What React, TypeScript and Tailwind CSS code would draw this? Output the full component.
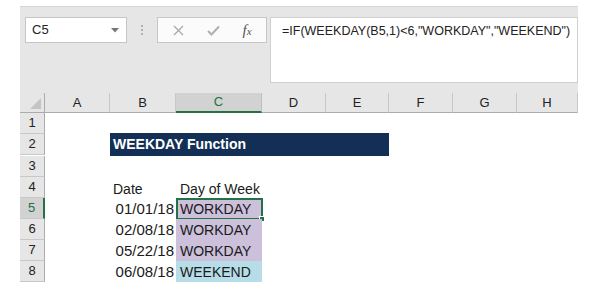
import React from 'react';

const cols = ['A', 'B', 'C', 'D', 'E', 'F', 'G', 'H'];

const Cell = ({ children, className = '' }: { children?: React.ReactNode; className?: string }) => (
  <div className={`h-[21px] flex items-center text-[14px] text-[#1a1a1a] ${className}`}>{children}</div>
);

const RowHead = ({ n, active = false }: { n: number; active?: boolean }) => (
  <div
    className={`h-[21px] flex items-center justify-center text-[13px] border-b border-[#c8c8c8] ${
      active ? 'bg-[#d2d2d2] text-[#217346] border-r-2 border-r-[#217346]' : 'bg-[#e6e6e6] text-[#222] border-r border-r-[#ababab]'
    }`}
  >
    {n}
  </div>
);

export default function App() {
  const rows = [
    { d: '01/01/18', v: 'WORKDAY', bg: 'bg-[#ccc0da]' },
    { d: '02/08/18', v: 'WORKDAY', bg: 'bg-[#ccc0da]' },
    { d: '05/22/18', v: 'WORKDAY', bg: 'bg-[#ccc0da]' },
    { d: '06/08/18', v: 'WEEKEND', bg: 'bg-[#b7dee8]' },
  ];

  return (
    <div className="w-[600px] h-[292px] bg-white pt-[6px] pl-[20px]" style={{ fontFamily: '"Liberation Sans", Arial, sans-serif' }}>
      <div className="w-[558px]">
        {/* formula toolbar */}
        <div className="h-[87px] bg-[#e6e6e6] border-t border-[#d6d6d6] pt-[10px] pl-[5px] flex items-start">
          <div className="w-[102px] h-[26px] bg-white border border-[#c6c6c6] flex items-center justify-between pl-[6px] pr-[7px]">
            <span className="text-[13px] text-[#222]">C5</span>
            <svg width="8" height="5" viewBox="0 0 8 5">
              <path d="M0 0 L8 0 L4 4.5 Z" fill="#777" />
            </svg>
          </div>
          <div className="w-[30px] h-[26px] flex flex-col items-center justify-center gap-[2px]">
            <span className="w-[2px] h-[2px] bg-[#b0b0b0]" />
            <span className="w-[2px] h-[2px] bg-[#b0b0b0]" />
            <span className="w-[2px] h-[2px] bg-[#b0b0b0]" />
          </div>
          <div className="w-[110px] h-[26px] bg-[#fbfbfb] border border-[#c6c6c6] flex items-center">
            <div className="w-[40px] flex justify-center">
              <svg width="11" height="11" viewBox="0 0 11 11">
                <path d="M1 1 L10 10 M10 1 L1 10" stroke="#a8a8a8" strokeWidth="1.3" />
              </svg>
            </div>
            <div className="w-[30px] flex justify-center">
              <svg width="13" height="11" viewBox="0 0 13 11">
                <path d="M1 6 L4.5 9.5 L12 1.5" stroke="#b0b0b0" strokeWidth="2" fill="none" />
              </svg>
            </div>
            <div className="w-[38px] flex justify-center">
              <span className="text-[15px] italic text-[#555]" style={{ fontFamily: '"Liberation Serif", serif' }}>
                f<span className="text-[11px]">x</span>
              </span>
            </div>
          </div>
          <div className="ml-[3px] flex-1 h-[66px] bg-white border border-[#d0d0d0] pl-[11px] pt-[4px] text-[12.5px] text-[#222] whitespace-nowrap">
            =IF(WEEKDAY(B5,1)&lt;6,"WORKDAY","WEEKEND")
          </div>
        </div>

        {/* sheet grid */}
        <div className="grid grid-cols-[25px_65px_66px_86px_64px_63px_64px_64px_61px]">
          {/* header row */}
          <div className="h-[20px] bg-[#e6e6e6] border-b border-[#ababab] border-r border-r-[#ababab] flex items-end justify-end p-[3px]">
            <svg width="11" height="11" viewBox="0 0 11 11">
              <path d="M11 0 L11 11 L0 11 Z" fill="#c4c4c4" />
            </svg>
          </div>
          {cols.map((c) => (
            <div
              key={c}
              className={`h-[20px] flex items-center justify-center text-[13px] ${
                c === 'C'
                  ? 'bg-[#d2d2d2] text-[#217346] border-b-2 border-[#217346] border-r border-r-[#c0c0c0]'
                  : 'bg-[#e6e6e6] text-[#222] border-b border-[#ababab] border-r border-r-[#c8c8c8]'
              }`}
            >
              {c}
            </div>
          ))}

          {/* row 1 */}
          <RowHead n={1} />
          <Cell className="col-span-8" />

          {/* row 2 */}
          <RowHead n={2} />
          <Cell />
          <Cell className="col-span-4 bg-[#132f56] text-white font-bold text-[12.5px] pl-[3px] mt-[-1px] h-[23px]">
            WEEKDAY Function
          </Cell>
          <Cell className="col-span-3" />

          {/* row 3 */}
          <RowHead n={3} />
          <Cell className="col-span-8" />

          {/* row 4 */}
          <RowHead n={4} />
          <Cell />
          <Cell className="pl-[3px] pt-[3px]">Date</Cell>
          <Cell className="pl-[4px] pt-[3px]">Day of Week</Cell>
          <Cell className="col-span-5" />

          {rows.map((r, i) => (
            <React.Fragment key={i}>
              <RowHead n={5 + i} active={i === 0} />
              <Cell />
              <Cell className="justify-end pr-[2px] pt-[2px] text-[15px]">{r.d}</Cell>
              <div className={`relative h-[21px] ${r.bg}`}>
                <div className="h-full flex items-center pl-[4px] pt-[2px] text-[14px] text-[#1a1a1a]">{r.v}</div>
                {i === 0 && (
                  <>
                    <div className="absolute left-0 top-0 w-[87px] h-[22px] border-2 border-[#217346]" />
                    <div className="absolute left-[83px] top-[18px] w-[6px] h-[6px] bg-[#217346] border border-white" />
                  </>
                )}
              </div>
              <Cell className="col-span-5" />
            </React.Fragment>
          ))}
        </div>
      </div>
    </div>
  );
}
